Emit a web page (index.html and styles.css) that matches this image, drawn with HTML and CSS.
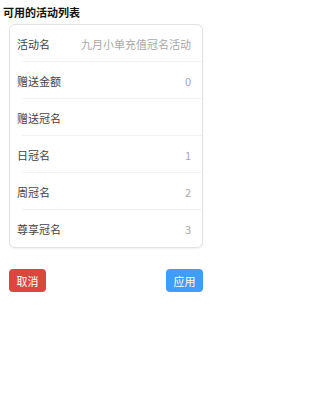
FILE: index.html
```html
<!DOCTYPE html>
<html>
<head>
<meta charset="utf-8">
<link rel="stylesheet" href="styles.css">
</head>
<body>
<div class="page">
  <div class="title">可用的活动列表</div>
  <div class="card">
    <div class="row"><span class="label">活动名</span><span class="value">九月小单充值冠名活动</span></div>
    <div class="row"><span class="label">赠送金额</span><span class="value">0</span></div>
    <div class="row"><span class="label">赠送冠名</span><span class="value"></span></div>
    <div class="row"><span class="label">日冠名</span><span class="value">1</span></div>
    <div class="row"><span class="label">周冠名</span><span class="value">2</span></div>
    <div class="row last"><span class="label">尊享冠名</span><span class="value">3</span></div>
  </div>
  <div class="actions">
    <button class="btn cancel">取消</button>
    <button class="btn apply">应用</button>
  </div>
</div>
</body>
</html>
```
FILE: styles.css
```css
html, body {
  margin: 0;
  padding: 0;
  background: #fff;
  font-family: "Noto Sans CJK SC", "Noto Sans", sans-serif;
}
.page {
  width: 212px;
}
.title {
  font-size: 11px;
  font-weight: bold;
  line-height: 16px;
  margin-top: 4px;
  padding-left: 3px;
  color: #111;
}
.card {
  margin: 4px 9px 0 9px;
  border: 1px solid #e2e2e2;
  border-radius: 6px;
  box-shadow: 0 1px 2px rgba(0,0,0,0.06);
  background: #fff;
}
.row {
  position: relative;
  height: 37px;
  display: flex;
  align-items: center;
  justify-content: space-between;
  padding: 0 11px 0 7px;
  font-size: 11px;
}
.row::after {
  content: "";
  position: absolute;
  left: 12px;
  right: 0;
  bottom: 0;
  height: 1px;
  background: #f3f3f3;
}
.row.last::after {
  display: none;
}
.label {
  color: #444;
}
.value {
  color: #a8a8a8;
}
.actions {
  display: flex;
  justify-content: space-between;
  margin: 21px 9px 0 9px;
}
.btn {
  border: none;
  width: 37px;
  height: 23px;
  border-radius: 4px;
  color: #fff;
  font-size: 11px;
  font-family: "Noto Sans CJK SC", "Noto Sans", sans-serif;
  padding: 0;
}
.cancel {
  background: #d9473f;
}
.apply {
  background: #3f9dfc;
}
```
